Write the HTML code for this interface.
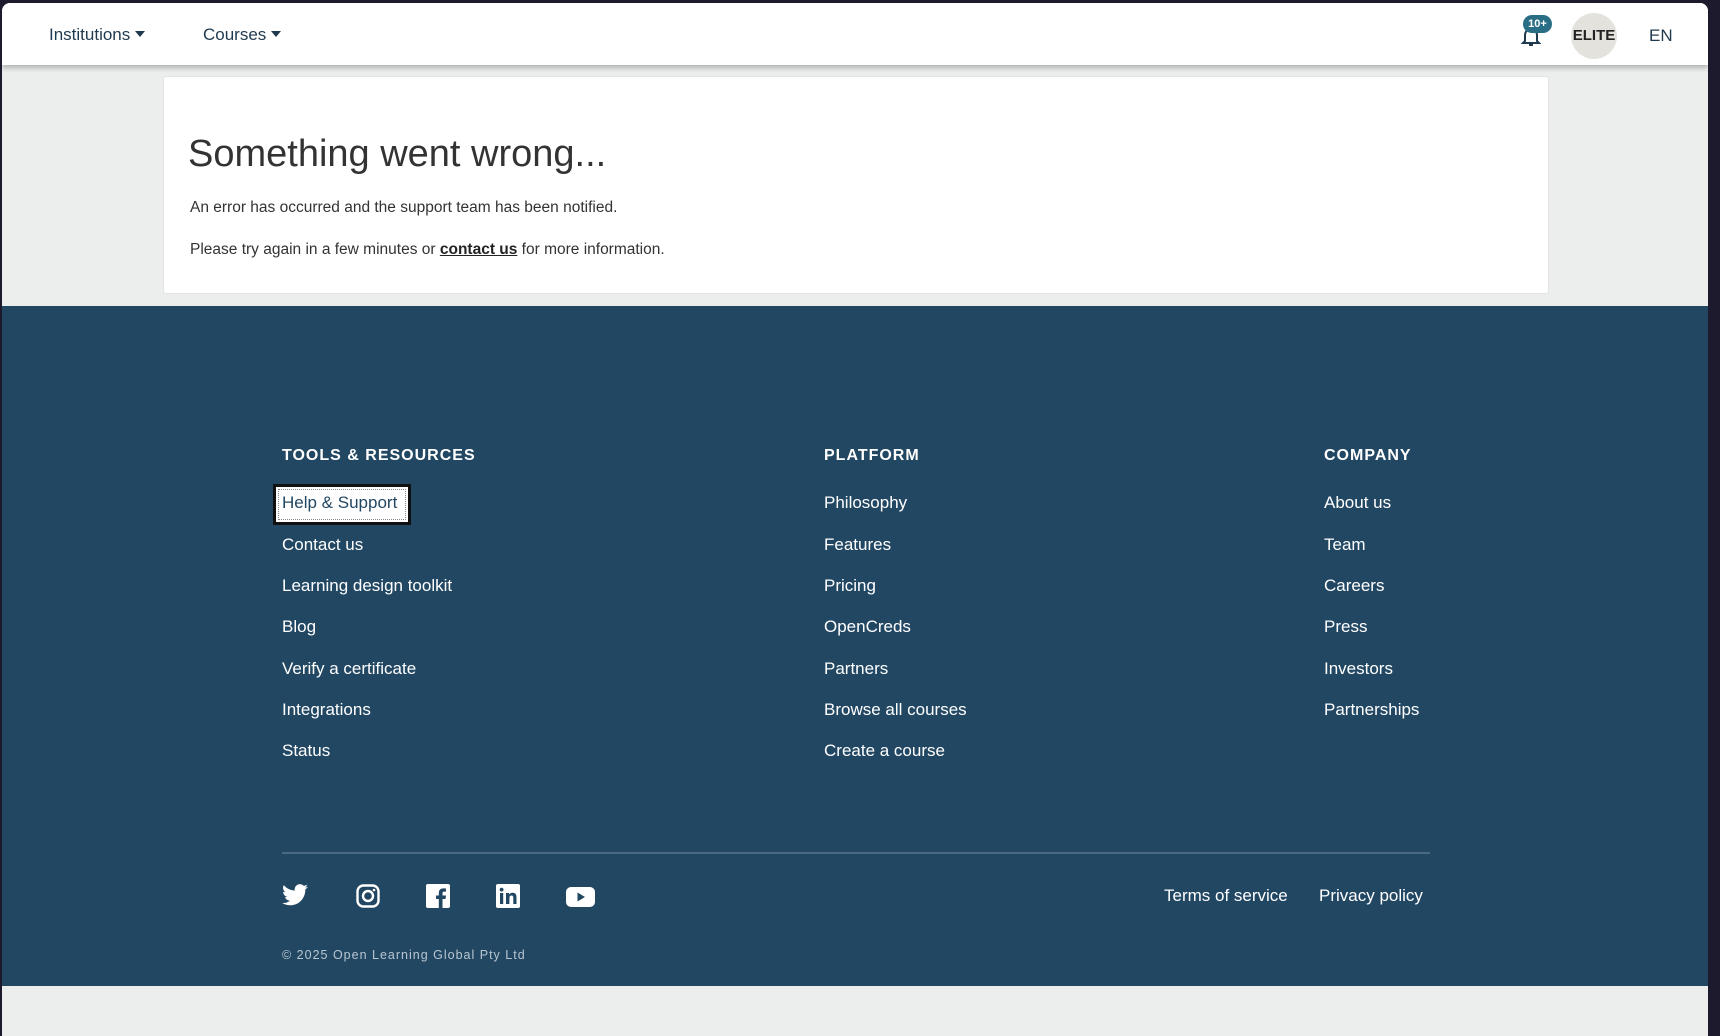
<!DOCTYPE html>
<html><head><meta charset="utf-8"><style>
*{margin:0;padding:0;box-sizing:border-box}
body{width:1720px;height:1036px;background:#1c1a2c;font-family:"Liberation Sans",sans-serif;position:relative;overflow:hidden}
.win{position:absolute;left:2px;top:3px;width:1706px;height:1033px;background:#eceeee;border-radius:8px 8px 0 0;overflow:hidden}
.nav{position:absolute;left:0;top:0;width:100%;height:62px;background:#fff;box-shadow:0 3px 5px rgba(0,0,0,.25)}
.nav span{position:absolute;top:22px;font-size:17px;color:#1f3a4f}
.tri{display:inline-block;width:0;height:0;border-left:5px solid transparent;border-right:5px solid transparent;border-top:6px solid #1f3a4f;margin-left:5px;vertical-align:3px}
.card{position:absolute;left:161px;top:73px;width:1386px;height:218px;background:#fff;border:1px solid #e2e4e4;border-radius:3px}
.card h1{position:absolute;left:24px;top:56px;font-weight:300;font-size:38px;color:#333}
.card p{position:absolute;left:26px;font-size:15.5px;color:#333}
.foot{position:absolute;left:0;top:303px;width:100%;height:680px;background:#224763;color:#fff}
.h{position:absolute;top:141px;font-weight:bold;font-size:16px;letter-spacing:1px}
.l{position:absolute;font-size:17px;color:#fff}
.hr{position:absolute;left:280px;top:546px;width:1148px;height:2px;background:#4b6a82}
.ic{position:absolute;top:578px}
</style></head><body><div class="win">
<div class="nav">
<span style="left:47px">Institutions<i class="tri"></i></span>
<span style="left:201px">Courses<i class="tri"></i></span>
<svg style="position:absolute;left:1518px;top:22px" width="22" height="22" viewBox="0 0 22 22"><path d="M5 16V10a6 6 0 0 1 12 0v6l2 2H3z" fill="none" stroke="#1f3a4f" stroke-width="2"/><path d="M9 20h4" stroke="#1f3a4f" stroke-width="2"/></svg>
<div style="position:absolute;left:1521px;top:12px;width:29px;height:18px;border-radius:9px;background:#2a6e86;color:#fff;font-size:11px;font-weight:bold;text-align:center;line-height:18px">10+</div>
<div style="position:absolute;left:1569px;top:10px;width:46px;height:46px;border-radius:50%;background:#e4e2dc;text-align:center;font:bold 15px/46px 'Liberation Sans',sans-serif;color:#222;overflow:hidden">ELITE</div>
<span style="left:1647px;top:23px">EN</span>
</div>
<div class="card">
<h1>Something went wrong...</h1>
<p style="top:122px">An error has occurred and the support team has been notified.</p>
<p style="top:164px">Please try again in a few minutes or <b style="text-decoration:underline;color:#222">contact us</b> for more information.</p>
</div>
<div class="foot">
<div class="h" style="left:280px">TOOLS &amp; RESOURCES</div>
<div class="h" style="left:822px">PLATFORM</div>
<div class="h" style="left:1322px">COMPANY</div>
<div style="position:absolute;left:271px;top:178px;width:138px;height:41px;background:#fff;border:3px solid #111;outline:1px dotted #888;outline-offset:-6px"></div>
<div class="l" style="left:280px;top:187px;color:#224763">Help &amp; Support</div>
<div class="l" style="left:280px;top:229px">Contact us</div>
<div class="l" style="left:280px;top:270px">Learning design toolkit</div>
<div class="l" style="left:280px;top:311px">Blog</div>
<div class="l" style="left:280px;top:353px">Verify a certificate</div>
<div class="l" style="left:280px;top:394px">Integrations</div>
<div class="l" style="left:280px;top:435px">Status</div>
<div class="l" style="left:822px;top:187px">Philosophy</div>
<div class="l" style="left:822px;top:229px">Features</div>
<div class="l" style="left:822px;top:270px">Pricing</div>
<div class="l" style="left:822px;top:311px">OpenCreds</div>
<div class="l" style="left:822px;top:353px">Partners</div>
<div class="l" style="left:822px;top:394px">Browse all courses</div>
<div class="l" style="left:822px;top:435px">Create a course</div>
<div class="l" style="left:1322px;top:187px">About us</div>
<div class="l" style="left:1322px;top:229px">Team</div>
<div class="l" style="left:1322px;top:270px">Careers</div>
<div class="l" style="left:1322px;top:311px">Press</div>
<div class="l" style="left:1322px;top:353px">Investors</div>
<div class="l" style="left:1322px;top:394px">Partnerships</div>
<div class="hr"></div>
<svg class="ic" style="left:280px" width="26" height="22" viewBox="0 0 24 20"><path fill="#fff" d="M24 2.4a10 10 0 0 1-2.8.8A5 5 0 0 0 23.3.4a10 10 0 0 1-3.1 1.2A4.9 4.9 0 0 0 11.8 6 14 14 0 0 1 1.7.9a4.9 4.9 0 0 0 1.5 6.6A4.9 4.9 0 0 1 1 6.9 4.9 4.9 0 0 0 4.9 11.8a4.9 4.9 0 0 1-2.2.1 4.9 4.9 0 0 0 4.6 3.4A9.9 9.9 0 0 1 0 17.3 14 14 0 0 0 7.5 19.5c9 0 14-7.5 14-14v-.6A10 10 0 0 0 24 2.4z"/></svg>
<svg class="ic" style="left:354px" width="24" height="24" viewBox="0 0 24 24"><rect x="1.5" y="1.5" width="21" height="21" rx="6" fill="none" stroke="#fff" stroke-width="2.4"/><circle cx="12" cy="12" r="5" fill="none" stroke="#fff" stroke-width="2.4"/><circle cx="18" cy="6" r="1.3" fill="#fff"/></svg>
<svg class="ic" style="left:424px" width="24" height="24" viewBox="0 0 24 24"><rect width="24" height="24" rx="2" fill="#fff"/><path fill="#224763" d="M16.5 24v-9h3l.5-3.5h-3.5V9.3c0-1 .3-1.7 1.8-1.7H20V4.5a25 25 0 0 0-2.7-.1c-2.7 0-4.5 1.6-4.5 4.6v2.5H10V15h2.8v9z"/></svg>
<svg class="ic" style="left:494px" width="24" height="24" viewBox="0 0 24 24"><rect width="24" height="24" rx="2" fill="#fff"/><rect x="4" y="9" width="3.2" height="11" fill="#224763"/><circle cx="5.6" cy="5.6" r="1.9" fill="#224763"/><path fill="#224763" d="M10 9h3v1.6c.5-1 1.8-1.9 3.6-1.9 3.3 0 3.9 2.1 3.9 5V20h-3.2v-5.5c0-1.3 0-3-1.8-3s-2.1 1.4-2.1 2.9V20H10z"/></svg>
<svg class="ic" style="left:564px;top:581px" width="29" height="20" viewBox="0 0 29 20"><rect width="29" height="20" rx="5" fill="#fff"/><path d="M11.5 5.5v9l7.5-4.5z" fill="#224763"/></svg>
<div class="l" style="left:1162px;top:580px">Terms of service</div>
<div class="l" style="left:1317px;top:580px">Privacy policy</div>
<div style="position:absolute;left:280px;top:642px;font-size:12.5px;letter-spacing:1px;color:#b8c6d1">© 2025 Open Learning Global Pty Ltd</div>
</div>
</div></body></html>
